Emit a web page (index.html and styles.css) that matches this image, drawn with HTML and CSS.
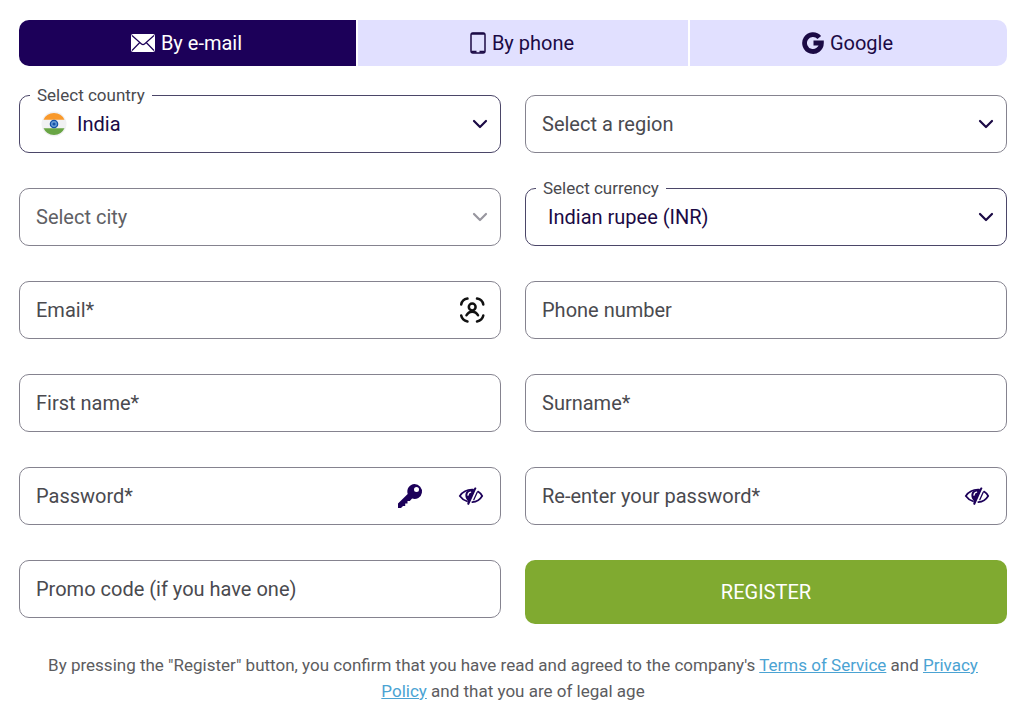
FILE: index.html
```html
<!DOCTYPE html>
<html lang="en">
<head>
    <meta charset="UTF-8">
    <meta name="viewport" content="width=device-width, initial-scale=1.0">
    <title>Registration</title>
    <link rel="stylesheet" href="styles.css">
</head>
<body>
    <svg class="sprite" aria-hidden="true">
        <symbol id="chevron" viewBox="0 0 16 16">
            <path d="M2 5l6 6 6-6" fill="none" stroke="currentColor" stroke-width="2.2" stroke-linecap="round" stroke-linejoin="round"/>
        </symbol>
        <symbol id="eye-off" viewBox="0 0 32 32">
            <g fill="none" stroke="currentColor" stroke-width="1.7" stroke-linecap="round">
                <path d="M12 21.300C9 20.300 6.500 18.400 4.800 16c2.800-4 7.500-6.600 13.200-6.300"/>
                <path d="M23 11.600c1.900 1.100 3.300 2.600 4.200 4.400-2.200 3.600-5.700 5.900-9.900 6.200"/>
                <path d="M22.200 12.300l-3.400 7.400" stroke-width="1.300"/>
            </g>
            <path d="M20 7.300l1.500.6-7.600 17.100-1.700-.7.600-3.400c-2.200-2-3.200-5.400-1.900-8.300 1.200-2.400 4-3.400 7.300-2.800z" fill="currentColor"/>
            <path d="M13 15.200c.1-1.700 1-2.700 2.600-3" fill="none" stroke="#fff" stroke-width="1.300" stroke-linecap="round"/>
        </symbol>
    </svg>

    <form class="register" onsubmit="return false">
        <div class="tabs">
            <button type="button" class="tab active">
                <svg width="24" height="18" viewBox="0 0 24 18" aria-hidden="true">
                    <rect width="24" height="18" rx="2" fill="#fff"/>
                    <path d="M1 1.500l9.500 8.500q1.500 1.300 3 0L23 1.500M1 16.500l7.800-8M23 16.500l-7.800-8" fill="none" stroke="#1c0059" stroke-width="1.200"/>
                </svg>
                By e-mail
            </button>
            <button type="button" class="tab">
                <svg width="16" height="22" viewBox="0 0 16 22" aria-hidden="true">
                    <rect x="1" y="1" width="14" height="20" rx="2" fill="none" stroke="currentColor" stroke-width="1.500"/>
                    <path d="M1.500 1.800h13M1.500 19.800h5M9.500 19.800h5" stroke="currentColor" stroke-width="2"/>
                </svg>
                By phone
            </button>
            <button type="button" class="tab">
                <svg width="22" height="22" viewBox="0 0 22 22" aria-hidden="true">
                    <path d="M17.300 5.500A8.400 8.400 0 1 0 19.400 11H11.500" fill="none" stroke="currentColor" stroke-width="4.800"/>
                </svg>
                Google
            </button>
        </div>

        <div class="fields">
            <div class="field filled">
                <label for="country">Select country</label>
                <svg class="flag" width="26" height="26" viewBox="0 0 26 26" aria-hidden="true">
                    <circle cx="13" cy="13" r="12.500" fill="#f1f1f3"/>
                    <path d="M2.500 8.700a11.600 11.600 0 0 1 21 0z" fill="#f9992b"/>
                    <path d="M2.500 17.300a11.600 11.600 0 0 0 21 0z" fill="#69a544"/>
                    <circle cx="13" cy="13" r="3.600" fill="#6d9fd8" stroke="#1552a8" stroke-width="1.400"/>
                    <circle cx="13" cy="13" r="1.600" fill="#1552a8"/>
                </svg>
                <select id="country" class="with-flag">
                    <option>India</option>
                </select>
                <svg class="arrow"><use href="#chevron"/></svg>
            </div>
            <div class="field">
                <select id="region" aria-label="Select a region">
                    <option>Select a region</option>
                </select>
                <svg class="arrow"><use href="#chevron"/></svg>
            </div>

            <div class="field disabled">
                <select id="city" aria-label="Select city" disabled>
                    <option>Select city</option>
                </select>
                <svg class="arrow"><use href="#chevron"/></svg>
            </div>
            <div class="field filled">
                <label for="currency">Select currency</label>
                <select id="currency" class="with-value">
                    <option>Indian rupee (INR)</option>
                </select>
                <svg class="arrow"><use href="#chevron"/></svg>
            </div>

            <div class="field">
                <input type="email" id="email" placeholder="Email*" aria-label="Email" required>
                <button type="button" class="icon-btn" aria-label="Fill from account">
                    <svg class="icon black" viewBox="0 0 32 32">
                        <g fill="none" stroke="currentColor" stroke-width="2.500" stroke-linecap="round">
                            <path d="M6.200 10.500C6.800 7.500 9 5.200 12.500 4.600M22 4.600c3.500.6 5.700 2.900 6.300 5.900M6.200 21.500c.6 3 2.800 5.200 6.300 5.900M22 27.400c3.500-.7 5.700-2.900 6.300-5.900"/>
                            <circle cx="17.200" cy="13" r="3.400"/>
                            <path d="M11.500 21.300c1.200-2.400 3.200-3.600 5.700-3.600s4.600 1.200 5.800 3.600"/>
                        </g>
                    </svg>
                </button>
            </div>
            <div class="field">
                <input type="tel" id="phone" placeholder="Phone number" aria-label="Phone number">
            </div>

            <div class="field">
                <input type="text" id="first-name" placeholder="First name*" aria-label="First name" required>
            </div>
            <div class="field">
                <input type="text" id="surname" placeholder="Surname*" aria-label="Surname" required>
            </div>

            <div class="field">
                <input type="password" id="password" placeholder="Password*" aria-label="Password" required>
                <button type="button" class="icon-btn key" aria-label="Generate password">
                    <svg class="icon" viewBox="0 0 32 32">
                        <path fill="currentColor" fill-rule="evenodd" d="M20.500 4a7.500 7.500 0 1 1-2.400 14.600L15.800 21h-2.300v2.500h-2.300V26H9l-2 2H4v-4.500l9.700-9.600A7.500 7.500 0 0 1 20.500 4zm2 3a2.500 2.500 0 1 0 0 5 2.500 2.500 0 0 0 0-5z"/>
                    </svg>
                </button>
                <button type="button" class="icon-btn" aria-label="Show password">
                    <svg class="icon"><use href="#eye-off"/></svg>
                </button>
            </div>
            <div class="field">
                <input type="password" id="password2" placeholder="Re-enter your password*" aria-label="Re-enter your password" required>
                <button type="button" class="icon-btn" aria-label="Show password">
                    <svg class="icon"><use href="#eye-off"/></svg>
                </button>
            </div>

            <div class="field">
                <input type="text" id="promo" placeholder="Promo code (if you have one)" aria-label="Promo code">
            </div>
            <button type="submit" class="submit">REGISTER</button>
        </div>

        <p class="terms">By pressing the "Register" button, you confirm that you have read and agreed to the company's <a href="#">Terms of Service</a> and <a href="#">Privacy Policy</a> and that you are of legal age</p>
    </form>
</body>
</html>
```
FILE: styles.css
```css
* {
    box-sizing: border-box;
}

body {
    margin: 0;
    background-color: #fff;
    font-family: Roboto, Arial, sans-serif;
    font-size: 20px;
    color: #4a4a4f;
}

button, input, select {
    font: inherit;
    color: inherit;
}

.sprite {
    display: none;
}

.register {
    padding: 20px 17px 20px 19px;
}

/* tabs */
.tabs {
    display: flex;
    gap: 2px;
    height: 46px;
    margin-bottom: 29px;
    border-radius: 10px;
    overflow: hidden;
}

.tab {
    flex: 1 1 auto;
    display: flex;
    align-items: center;
    justify-content: center;
    gap: 6px;
    padding: 0 2px 0 0;
    border: none;
    background-color: #e1e0ff;
    color: #1b0a45;
    cursor: pointer;
}

.tab.active {
    background-color: #1c0059;
    color: #fff;
}

/* fields */
.fields {
    display: grid;
    grid-template-columns: 1fr 1fr;
    gap: 35px 24px;
    align-items: start;
}

.field {
    position: relative;
    display: flex;
    align-items: center;
    height: 58px;
    padding-right: 13px;
    border: 1px solid #85838f;
    border-radius: 10px;
}

.field.filled {
    border-color: #4b4668;
}

.field input, .field select {
    flex: 1;
    min-width: 0;
    height: 100%;
    margin: 0;
    padding: 0 0 0 16px;
    border: none;
    outline: none;
    background: transparent;
    appearance: none;
}

.field input::placeholder {
    color: #4a4a4f;
    opacity: 1;
}

.field.filled select {
    color: #1b0a45;
}

.field.disabled select {
    color: #606064;
    opacity: 1;
}

.field .with-flag {
    padding-left: 57px;
}

.field .with-value {
    padding-left: 22px;
}

.field label {
    position: absolute;
    top: -12px;
    left: 10px;
    padding: 0 7px;
    background-color: #fff;
    font-size: 17px;
    line-height: 22px;
}

.flag {
    position: absolute;
    top: 15px;
    left: 21px;
}

.arrow {
    position: absolute;
    top: 20px;
    right: 12px;
    width: 16px;
    height: 16px;
    color: #1b0a45;
    pointer-events: none;
}

.disabled .arrow {
    color: #98969f;
}

.icon-btn {
    display: flex;
    padding: 0;
    border: none;
    background: none;
    color: #1c0059;
    cursor: pointer;
}

.icon-btn.key {
    margin-right: 29px;
}

.icon {
    width: 32px;
    height: 32px;
}

.icon.black {
    color: #111;
}

.submit {
    height: 64px;
    border: none;
    border-radius: 10px;
    background-color: #80aa30;
    color: #fff;
    cursor: pointer;
}

.terms {
    margin: 28px 0 0;
    padding: 0 17px;
    font-size: 17px;
    line-height: 26px;
    text-align: center;
    color: #5c5c60;
}

.terms a {
    color: #4ba3d3;
}
```
